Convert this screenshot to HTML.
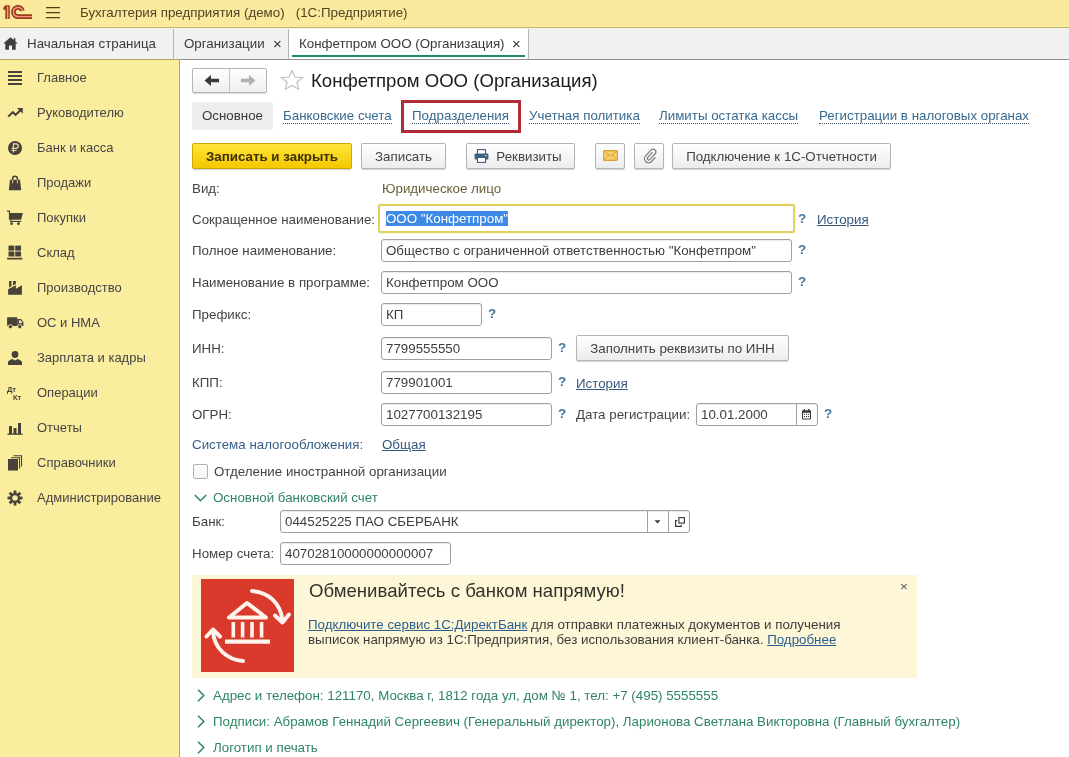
<!DOCTYPE html>
<html lang="ru">
<head>
<meta charset="utf-8">
<title>Конфетпром ООО (Организация)</title>
<style>
*{box-sizing:border-box;margin:0;padding:0}
html,body{width:1069px;height:757px;overflow:hidden;background:#fff}
body{font-family:"Liberation Sans",sans-serif;font-size:13.33px;color:#444;position:relative}
.abs{position:absolute;white-space:nowrap}
#titlebar{position:absolute;left:0;top:0;width:1069px;height:28px;background:#fbe99d;border-bottom:1px solid #c9b36b}
#tabbar{position:absolute;left:0;top:28px;width:1069px;height:32px;background:#f1f1f1;border-bottom:1px solid #8f8f8f}
#sidebar{position:absolute;left:0;top:60px;width:180px;height:697px;margin-top:0;background:#fbed9e;border-right:1px solid #b9a55e}
.tab{position:absolute;top:1px;height:30px;line-height:30px;font-size:13.33px;color:#3a3a3a;white-space:nowrap}
.nav{position:absolute;left:37px;margin-top:0px;font-size:13px;color:#454545;white-space:nowrap;line-height:16px}
.ico{position:absolute;left:7px;margin-top:-1px;width:16px;height:16px;overflow:visible}
.lbl{position:absolute;left:192px;margin-top:1px;font-size:13.33px;color:#444;white-space:nowrap;line-height:16px}
.inp{position:absolute;height:23px;border:1px solid #a0a0a0;border-radius:3px;background:#fff;box-shadow:inset 0 1px 1px rgba(0,0,0,.08);font-size:13.33px;color:#3e3e3e;line-height:22px;padding-left:4px;white-space:nowrap;overflow:hidden}
.q{position:absolute;font-size:13.5px;color:#447799;font-weight:bold;line-height:16px;margin-left:1px;margin-top:-1px}
.link{position:absolute;margin-top:1px;font-size:13.33px;color:#35597d;text-decoration:underline;white-space:nowrap;line-height:16px}
.btn{position:absolute;height:26px;padding-top:1px;border:1px solid #b4b4b4;border-radius:2px;background:linear-gradient(#ffffff,#ececec);box-shadow:0 1px 1px rgba(0,0,0,.18);font-size:13.33px;color:#444;line-height:23px;text-align:center;white-space:nowrap}
.grp{position:absolute;left:213px;margin-top:1px;font-size:13.33px;color:#2f8562;white-space:nowrap;line-height:16px}
.chev{position:absolute;left:193px}
.navlink{position:absolute;top:108px;font-size:13.33px;color:#386a90;white-space:nowrap;line-height:16px;border-bottom:1px dotted #3c4f60;height:16px}
</style>
</head>
<body>
<div id="root" style="position:absolute;left:0;top:0;width:1069px;height:757px;will-change:transform">
<div id="titlebar">
  <svg class="abs" style="left:0;top:0" width="36" height="24" viewBox="0 0 36 24">
    <path d="M5.3 5.2 H9.8 V19 H5.3 V9.7 H3.2 V8 Z" fill="#9c3d1f"/>
    <path d="M22.44 10.8 A4.6 4.6 0 1 0 18 16.6 H32" fill="none" stroke="#9c3d1f" stroke-width="4.8"/>
    <g fill="none" stroke="#f49a7c" stroke-width="1.4">
      <path d="M7.6 6.2 V19"/>
      <path d="M22.44 10.8 A4.6 4.6 0 1 0 18 16.6 H32"/>
    </g>
  </svg>
  <div class="abs" style="left:46px;top:7px;width:14px;height:1px;background:#4e3f14;box-shadow:0 1px 0 rgba(78,63,20,.25)"></div>
  <div class="abs" style="left:46px;top:12px;width:14px;height:1px;background:#4e3f14;box-shadow:0 1px 0 rgba(78,63,20,.25)"></div>
  <div class="abs" style="left:46px;top:17px;width:14px;height:1px;background:#4e3f14;box-shadow:0 1px 0 rgba(78,63,20,.25)"></div>
  <div class="abs" style="left:80px;top:5px;font-size:13.33px;color:#4f4424;line-height:16px">Бухгалтерия предприятия (демо)&nbsp;&nbsp;&nbsp;(1С:Предприятие)</div>
</div>
<div id="tabbar">
  <div class="tab" style="left:0;width:174px;border-right:1px solid #b5b5b5;padding-left:27px">Начальная страница</div>
  <svg class="abs" style="left:3px;top:9px" width="15" height="13" viewBox="0 0 15 13"><path d="M7.5 0.3 L0.2 6.6 H2.3 V12.8 H6 V8.6 H9 V12.8 H12.7 V6.6 H14.8 Z" fill="#3f3f3f"/><rect x="10.6" y="1.2" width="1.8" height="3.5" fill="#3f3f3f"/></svg>
  <div class="tab" style="left:174px;width:115px;border-right:1px solid #b5b5b5;padding-left:10px">Организации</div>
  <div class="tab" style="left:273px;font-size:15px;color:#333">×</div>
  <div class="tab" style="left:289px;width:240px;background:#fff;border-right:1px solid #b5b5b5;padding-left:10px">Конфетпром ООО (Организация)</div>
  <div class="tab" style="left:512px;font-size:15px;color:#333">×</div>
  <div class="abs" style="left:292px;top:27px;width:233px;height:2px;background:#1e8a6a"></div>
</div>
<div class="abs" style="left:0;top:59px;width:180px;height:1px;background:#b3a465;z-index:2"></div>
<div id="sidebar">
  <svg class="ico" style="top:11px" viewBox="0 0 16 16"><rect x="1" y="1" width="14" height="2" fill="#46423a"/><rect x="1" y="5" width="14" height="2" fill="#46423a"/><rect x="1" y="9" width="14" height="2" fill="#46423a"/><rect x="1" y="13" width="14" height="2" fill="#46423a"/></svg><div class="nav" style="top:10px">Главное</div>
  <svg class="ico" style="top:46px" viewBox="0 0 16 16"><path d="M1.2 11.6 L5.8 7.2 L8.6 9.8 L14 4.8" fill="none" stroke="#46423a" stroke-width="2"/><path d="M10 3 H15.8 V8.8 Z" fill="#46423a"/></svg><div class="nav" style="top:45px">Руководителю</div>
  <svg class="ico" style="top:81px" viewBox="0 0 16 16"><circle cx="8" cy="8" r="7" fill="#46423a"/><path d="M6.4 12.6 V3.8 H9 A2.3 2.3 0 0 1 9 8.4 H4.6 M4.6 10.5 H9.6" fill="none" stroke="#f3e6a8" stroke-width="1.15"/></svg><div class="nav" style="top:80px">Банк и касса</div>
  <svg class="ico" style="top:116px" viewBox="0 0 16 16"><path d="M5.6 5.5 V3.6 A2.4 2.4 0 0 1 10.4 3.6 V5.5" fill="none" stroke="#46423a" stroke-width="1.5"/><path d="M3 4.8 H13 L14.2 15.2 H1.8 Z" fill="#46423a"/><path d="M5.6 4.8 V8.2 M10.4 4.8 V8.2" fill="none" stroke="#cdbf84" stroke-width="1.1"/></svg><div class="nav" style="top:115px">Продажи</div>
  <svg class="ico" style="top:151px" viewBox="0 0 16 16"><path d="M0 0.6 H3 V3 H16 L14.1 9.8 H1.9 V1.8 H0 Z" fill="#46423a"/><rect x="3.2" y="10.9" width="11" height="1.1" fill="#46423a"/><rect x="3.2" y="9.8" width="1.1" height="1.5" fill="#46423a"/><circle cx="4.6" cy="13.7" r="1.4" fill="#46423a"/><circle cx="11.5" cy="13.7" r="1.4" fill="#46423a"/></svg><div class="nav" style="top:150px">Покупки</div>
  <svg class="ico" style="top:186px" viewBox="0 0 16 16"><rect x="1.5" y="0.6" width="5.8" height="5" fill="#46423a"/><rect x="8.2" y="0.6" width="5.8" height="5" fill="#46423a"/><rect x="1.5" y="6.5" width="5.8" height="5" fill="#46423a"/><rect x="8.2" y="6.5" width="5.8" height="5" fill="#46423a"/><rect x="0.1" y="12.8" width="15.2" height="1.7" fill="#46423a"/></svg><div class="nav" style="top:185px">Склад</div>
  <svg class="ico" style="top:221px" viewBox="0 0 16 16"><path d="M1.1 14.7 V9.3 L8.9 5.2 V8.7 L14.9 5.2 V14.7 Z" fill="#46423a"/><path d="M2.1 1.1 H4.5 V6.3 L2.1 7.6 Z" fill="#46423a"/><path d="M6 1.1 H8.9 V3.9 L6 5.5 Z" fill="#46423a"/></svg><div class="nav" style="top:220px">Производство</div>
  <svg class="ico" style="top:256px" viewBox="0 0 16 16"><rect x="0.1" y="2.3" width="10.3" height="8.6" rx="0.8" fill="#46423a"/><path d="M10.4 4 H14.2 L16.4 7.2 V10.9 H10.4 Z" fill="#46423a"/><path d="M12 5.3 H13.8 L15.3 7.6 V8.2 H12 Z" fill="#efe2a0"/><circle cx="3.4" cy="11.7" r="2.1" fill="#46423a" stroke="#fbed9e" stroke-width=".9"/><circle cx="12.8" cy="11.7" r="2.1" fill="#46423a" stroke="#fbed9e" stroke-width=".9"/></svg><div class="nav" style="top:255px">ОС и НМА</div>
  <svg class="ico" style="top:291px" viewBox="0 0 16 16"><circle cx="8" cy="4.5" r="3.4" fill="#46423a"/><path d="M1 15 V12.5 C1 10.5 4 9.5 5.5 9 L8 10.5 L10.5 9 C12 9.5 15 10.5 15 12.5 V15 Z" fill="#46423a"/></svg><div class="nav" style="top:290px">Зарплата и кадры</div>
  <svg class="ico" style="top:326px" viewBox="0 0 16 16"><text x="0" y="7" font-family="Liberation Sans" font-size="7.5" font-weight="bold" fill="#46423a">Дт</text><text x="6" y="15" font-family="Liberation Sans" font-size="7.5" font-weight="bold" fill="#46423a">Кт</text></svg><div class="nav" style="top:325px">Операции</div>
  <svg class="ico" style="top:361px" viewBox="0 0 16 16"><rect x="2" y="6" width="3" height="8" fill="#46423a"/><rect x="6.5" y="8" width="3" height="6" fill="#46423a"/><rect x="11" y="3" width="3" height="11" fill="#46423a"/><rect x="0.5" y="13.5" width="15" height="1.3" fill="#46423a"/></svg><div class="nav" style="top:360px">Отчеты</div>
  <svg class="ico" style="top:396px" viewBox="0 0 16 16"><rect x="1" y="4" width="10" height="11.5" fill="#46423a"/><path d="M4 2.7 H12.5 V13.5 M6.5 0.7 H14.5 V11.5" fill="none" stroke="#46423a" stroke-width="1.1"/></svg><div class="nav" style="top:395px">Справочники</div>
  <svg class="ico" style="top:431px" viewBox="0 0 16 16"><g transform="translate(8 8)"><g fill="#46423a"><rect x="-1.4" y="-7.5" width="2.8" height="15"/><rect x="-1.4" y="-7.5" width="2.8" height="15" transform="rotate(45)"/><rect x="-1.4" y="-7.5" width="2.8" height="15" transform="rotate(90)"/><rect x="-1.4" y="-7.5" width="2.8" height="15" transform="rotate(135)"/></g><circle r="5" fill="#46423a"/><circle r="2.8" fill="#fbed9e"/></g></svg><div class="nav" style="top:430px">Администрирование</div>
</div>

<!-- header row -->
<div class="abs" style="left:192px;top:68px;width:75px;height:25px;border:1px solid #b4b4b4;border-radius:2px;background:linear-gradient(#fff,#efefef);box-shadow:0 1px 1px rgba(0,0,0,.15)">
  <div style="position:absolute;left:36px;top:0;width:1px;height:23px;background:#c4c4c4"></div>
  <svg style="position:absolute;left:11px;top:5px" width="16" height="13" viewBox="0 0 16 13"><path d="M0.5 6.5 L7 1 V4.7 H15 V8.3 H7 V12 Z" fill="#3a3a3a"/></svg>
  <svg style="position:absolute;left:47px;top:5px" width="16" height="13" viewBox="0 0 16 13"><path d="M15.5 6.5 L9 1 V4.7 H1 V8.3 H9 V12 Z" fill="#b0b0b0"/></svg>
</div>
<svg class="abs" style="left:279.5px;top:68.5px" width="24" height="21.5" viewBox="0 0 24 23" preserveAspectRatio="none"><path d="M12 1.6 L15 8.6 L22.6 9.2 L16.8 14.2 L18.6 21.6 L12 17.6 L5.4 21.6 L7.2 14.2 L1.4 9.2 L9 8.6 Z" fill="#fff" stroke="#bdbdbd" stroke-width="1.1" stroke-linejoin="miter"/></svg>
<div class="abs" style="left:311px;top:69px;font-size:18.6px;line-height:24px;color:#1c1c1c">Конфетпром ООО (Организация)</div>

<!-- sub navigation -->
<div class="abs" style="left:192px;top:102px;width:81px;height:28px;background:#eeeeee;border-radius:2px;line-height:28px;text-align:center;color:#3a3a3a">Основное</div>
<div class="navlink" style="left:283px">Банковские счета</div>
<div class="abs" style="left:401px;top:100px;width:120px;height:33px;border:3px solid #b02a37"></div>
<div class="navlink" style="left:412px">Подразделения</div>
<div class="navlink" style="left:529px">Учетная политика</div>
<div class="navlink" style="left:659px">Лимиты остатка кассы</div>
<div class="navlink" style="left:819px">Регистрации в налоговых органах</div>

<!-- command bar -->
<div class="btn" style="left:192px;top:143px;width:160px;background:linear-gradient(#ffe53a,#f5c800);border-color:#c9a700;color:#3a3000;font-weight:bold">Записать и закрыть</div>
<div class="btn" style="left:361px;top:143px;width:85px">Записать</div>
<div class="btn" style="left:466px;top:143px;width:109px;padding-left:17px">Реквизиты
  <svg style="position:absolute;left:7px;top:5px" width="15" height="14" viewBox="0 0 15 14"><rect x="3.5" y="0.6" width="8" height="5" fill="#fff" stroke="#3f5f7f" stroke-width="1.1"/><rect x="0.6" y="4.6" width="13.8" height="6" rx="1" fill="#3f5f7f"/><rect x="3.5" y="8.4" width="8" height="5" fill="#fff" stroke="#3f5f7f" stroke-width="1.1"/><rect x="11" y="6" width="1.6" height="1.2" fill="#cfe0ef"/></svg>
</div>
<div class="btn" style="left:595px;top:143px;width:30px"><svg style="position:absolute;left:7px;top:6px" width="15" height="11" viewBox="0 0 15 11"><rect x="0.6" y="0.6" width="13.8" height="9.8" rx="1" fill="#f6cf6b" stroke="#d9a033" stroke-width="1.1"/><path d="M1 1 L7.5 6 L14 1 M1 10 L5.6 5 M14 10 L9.4 5" fill="none" stroke="#d9a033" stroke-width="1"/></svg></div>
<div class="btn" style="left:634px;top:143px;width:30px"><svg style="position:absolute;left:8px;top:4px" width="14" height="16" viewBox="0 0 14 16"><path d="M9.6 4.2 L4.6 9.6 A1.5 1.5 0 0 0 6.8 11.6 L12 6 A2.8 2.8 0 0 0 7.9 2.1 L2.6 7.9 A4.1 4.1 0 0 0 8.6 13.5 L12.4 9.4" fill="none" stroke="#7b7b7b" stroke-width="1.2"/></svg></div>
<div class="btn" style="left:672px;top:143px;width:219px">Подключение к 1С-Отчетности</div>

<!-- form -->
<div class="lbl" style="top:180px">Вид:</div>
<div class="abs" style="left:382px;top:181px;line-height:16px;color:#6b5d35">Юридическое лицо</div>

<div class="lbl" style="top:211px">Сокращенное наименование:</div>
<div class="inp" style="left:378px;top:204px;width:417px;height:29px;border:2px solid #e2d162;border-radius:2px;box-shadow:0 0 2px #f3e9a0;line-height:25px;padding-left:6px"><span style="background:#3d8ae6;color:#fff">ООО "Конфетпром"</span></div>
<div class="q" style="left:797px;top:212px">?</div>
<div class="link" style="left:817px;top:211px">История</div>

<div class="lbl" style="top:242px">Полное наименование:</div>
<div class="inp" style="left:381px;top:239px;width:411px">Общество с ограниченной ответственностью "Конфетпром"</div>
<div class="q" style="left:797px;top:243px">?</div>

<div class="lbl" style="top:274px">Наименование в программе:</div>
<div class="inp" style="left:381px;top:271px;width:411px">Конфетпром ООО</div>
<div class="q" style="left:797px;top:275px">?</div>

<div class="lbl" style="top:306px">Префикс:</div>
<div class="inp" style="left:381px;top:303px;width:101px">КП</div>
<div class="q" style="left:487px;top:307px">?</div>

<div class="lbl" style="top:340px">ИНН:</div>
<div class="inp" style="left:381px;top:337px;width:171px">7799555550</div>
<div class="q" style="left:557px;top:341px">?</div>
<div class="btn" style="left:576px;top:335px;width:213px">Заполнить реквизиты по ИНН</div>

<div class="lbl" style="top:374px">КПП:</div>
<div class="inp" style="left:381px;top:371px;width:171px">779901001</div>
<div class="q" style="left:557px;top:375px">?</div>
<div class="link" style="left:576px;top:375px">История</div>

<div class="lbl" style="top:406px">ОГРН:</div>
<div class="inp" style="left:381px;top:403px;width:171px">1027700132195</div>
<div class="q" style="left:557px;top:407px">?</div>
<div class="lbl" style="left:576px;top:406px">Дата регистрации:</div>
<div class="inp" style="left:696px;top:403px;width:122px">10.01.2000<div style="position:absolute;left:99px;top:0;width:1px;height:22px;background:#a0a0a0"></div>
<svg style="position:absolute;left:104px;top:5px" width="11" height="11" viewBox="0 0 11 11"><rect x="1" y="1.2" width="9" height="9.3" rx="1" fill="#3a3a3a"/><rect x="2" y="3.8" width="7" height="5.7" fill="#fff"/><rect x="2.6" y="0" width="1.4" height="2" fill="#3a3a3a"/><rect x="7" y="0" width="1.4" height="2" fill="#3a3a3a"/><g fill="#3a3a3a"><rect x="2.9" y="4.8" width="1.1" height="1.1"/><rect x="5" y="4.8" width="1.1" height="1.1"/><rect x="7.1" y="4.8" width="1.1" height="1.1"/><rect x="2.9" y="7" width="1.1" height="1.1"/><rect x="5" y="7" width="1.1" height="1.1"/><rect x="7.1" y="7" width="1.1" height="1.1"/></g></svg></div>
<div class="q" style="left:823px;top:407px">?</div>

<div class="lbl" style="top:436px;color:#386088">Система налогообложения:</div>
<div class="link" style="left:382px;top:436px">Общая</div>

<div class="abs" style="left:193px;top:464px;width:15px;height:15px;border:1px solid #b0b0b0;border-radius:2px;background:linear-gradient(#fff,#f4f4f4)"></div>
<div class="lbl" style="left:214px;top:463px">Отделение иностранной организации</div>

<svg class="chev" style="left:194px;top:494px" width="13" height="8" viewBox="0 0 13 8"><path d="M0.8 1 L6.5 6.8 L12.2 1" fill="none" stroke="#2f8562" stroke-width="1.5"/></svg>
<div class="grp" style="top:489px">Основной банковский счет</div>

<div class="lbl" style="top:513px">Банк:</div>
<div class="inp" style="left:280px;top:510px;width:410px">044525225 ПАО СБЕРБАНК<div style="position:absolute;left:366px;top:0;width:1px;height:22px;background:#a0a0a0"></div><div style="position:absolute;left:387px;top:0;width:1px;height:22px;background:#a0a0a0"></div>
<svg style="position:absolute;left:373px;top:9px" width="7" height="4" viewBox="0 0 7 4"><path d="M0.5 0.3 H6.5 L3.5 3.6 Z" fill="#3a3a3a"/></svg>
<svg style="position:absolute;left:394px;top:6px" width="10" height="10" viewBox="0 0 10 10"><rect x="3.9" y="0.6" width="5.5" height="5.5" fill="#fff" stroke="#333" stroke-width="1.1"/><path d="M2.2 3.6 H0.6 V9.4 H6.2 V7.8" fill="none" stroke="#333" stroke-width="1.1"/></svg></div>

<div class="lbl" style="top:545px">Номер счета:</div>
<div class="inp" style="left:280px;top:542px;width:171px">40702810000000000007</div>

<!-- banner -->
<div class="abs" style="left:192px;top:575px;width:725px;height:103px;background:#fdf7d8"></div>
<svg class="abs" style="left:201px;top:579px" width="93" height="93" viewBox="0 0 93 93"><rect width="93" height="93" fill="#d93a2b"/>
<g fill="none" stroke="#fff3ec" stroke-width="4" stroke-linecap="round" stroke-linejoin="round">
<path d="M46 24 L28 38.5 H65 Z"/>
<path d="M24 62.7 H69" stroke-width="4.2" stroke-linecap="butt"/>
<path d="M51 12 C67 13 80 24 81.5 42"/>
<path d="M74 36.5 L81.5 43.5 L88 35.5"/>
<path d="M42 82 C27 81 13 70 12 52"/>
<path d="M5.5 57.5 L12 50.5 L19 57.5"/>
</g>
<g fill="#fff3ec"><rect x="30.5" y="43" width="3.6" height="15.5"/><rect x="39.8" y="43" width="3.6" height="15.5"/><rect x="49.2" y="43" width="3.6" height="15.5"/><rect x="58.8" y="43" width="3.6" height="15.5"/></g>
</svg>
<div class="abs" style="left:309px;top:579px;font-size:18.6px;line-height:24px;color:#33332c">Обменивайтесь с банком напрямую!</div>
<div class="abs" style="left:308px;top:617px;line-height:15px;color:#3c3c3c"><span style="color:#2c5f8f;text-decoration:underline">Подключите сервис 1С:ДиректБанк</span> для отправки платежных документов и получения<br>выписок напрямую из 1С:Предприятия, без использования клиент-банка. <span style="color:#2c5f8f;text-decoration:underline">Подробнее</span></div>
<div class="abs" style="left:900px;top:579px;font-size:13.5px;line-height:16px;color:#555">×</div>

<!-- collapsed groups -->
<svg class="chev" style="left:197px;top:689px" width="8" height="13" viewBox="0 0 8 13"><path d="M1 0.8 L6.8 6.5 L1 12.2" fill="none" stroke="#2f8562" stroke-width="1.5"/></svg>
<div class="grp" style="top:687px">Адрес и телефон: 121170, Москва г, 1812 года ул, дом № 1, тел: +7 (495) 5555555</div>
<svg class="chev" style="left:197px;top:715px" width="8" height="13" viewBox="0 0 8 13"><path d="M1 0.8 L6.8 6.5 L1 12.2" fill="none" stroke="#2f8562" stroke-width="1.5"/></svg>
<div class="grp" style="top:713px">Подписи: Абрамов Геннадий Сергеевич (Генеральный директор), Ларионова Светлана Викторовна (Главный бухгалтер)</div>
<svg class="chev" style="left:197px;top:741px" width="8" height="13" viewBox="0 0 8 13"><path d="M1 0.8 L6.8 6.5 L1 12.2" fill="none" stroke="#2f8562" stroke-width="1.5"/></svg>
<div class="grp" style="top:739px">Логотип и печать</div>
</div>
</body>
</html>
